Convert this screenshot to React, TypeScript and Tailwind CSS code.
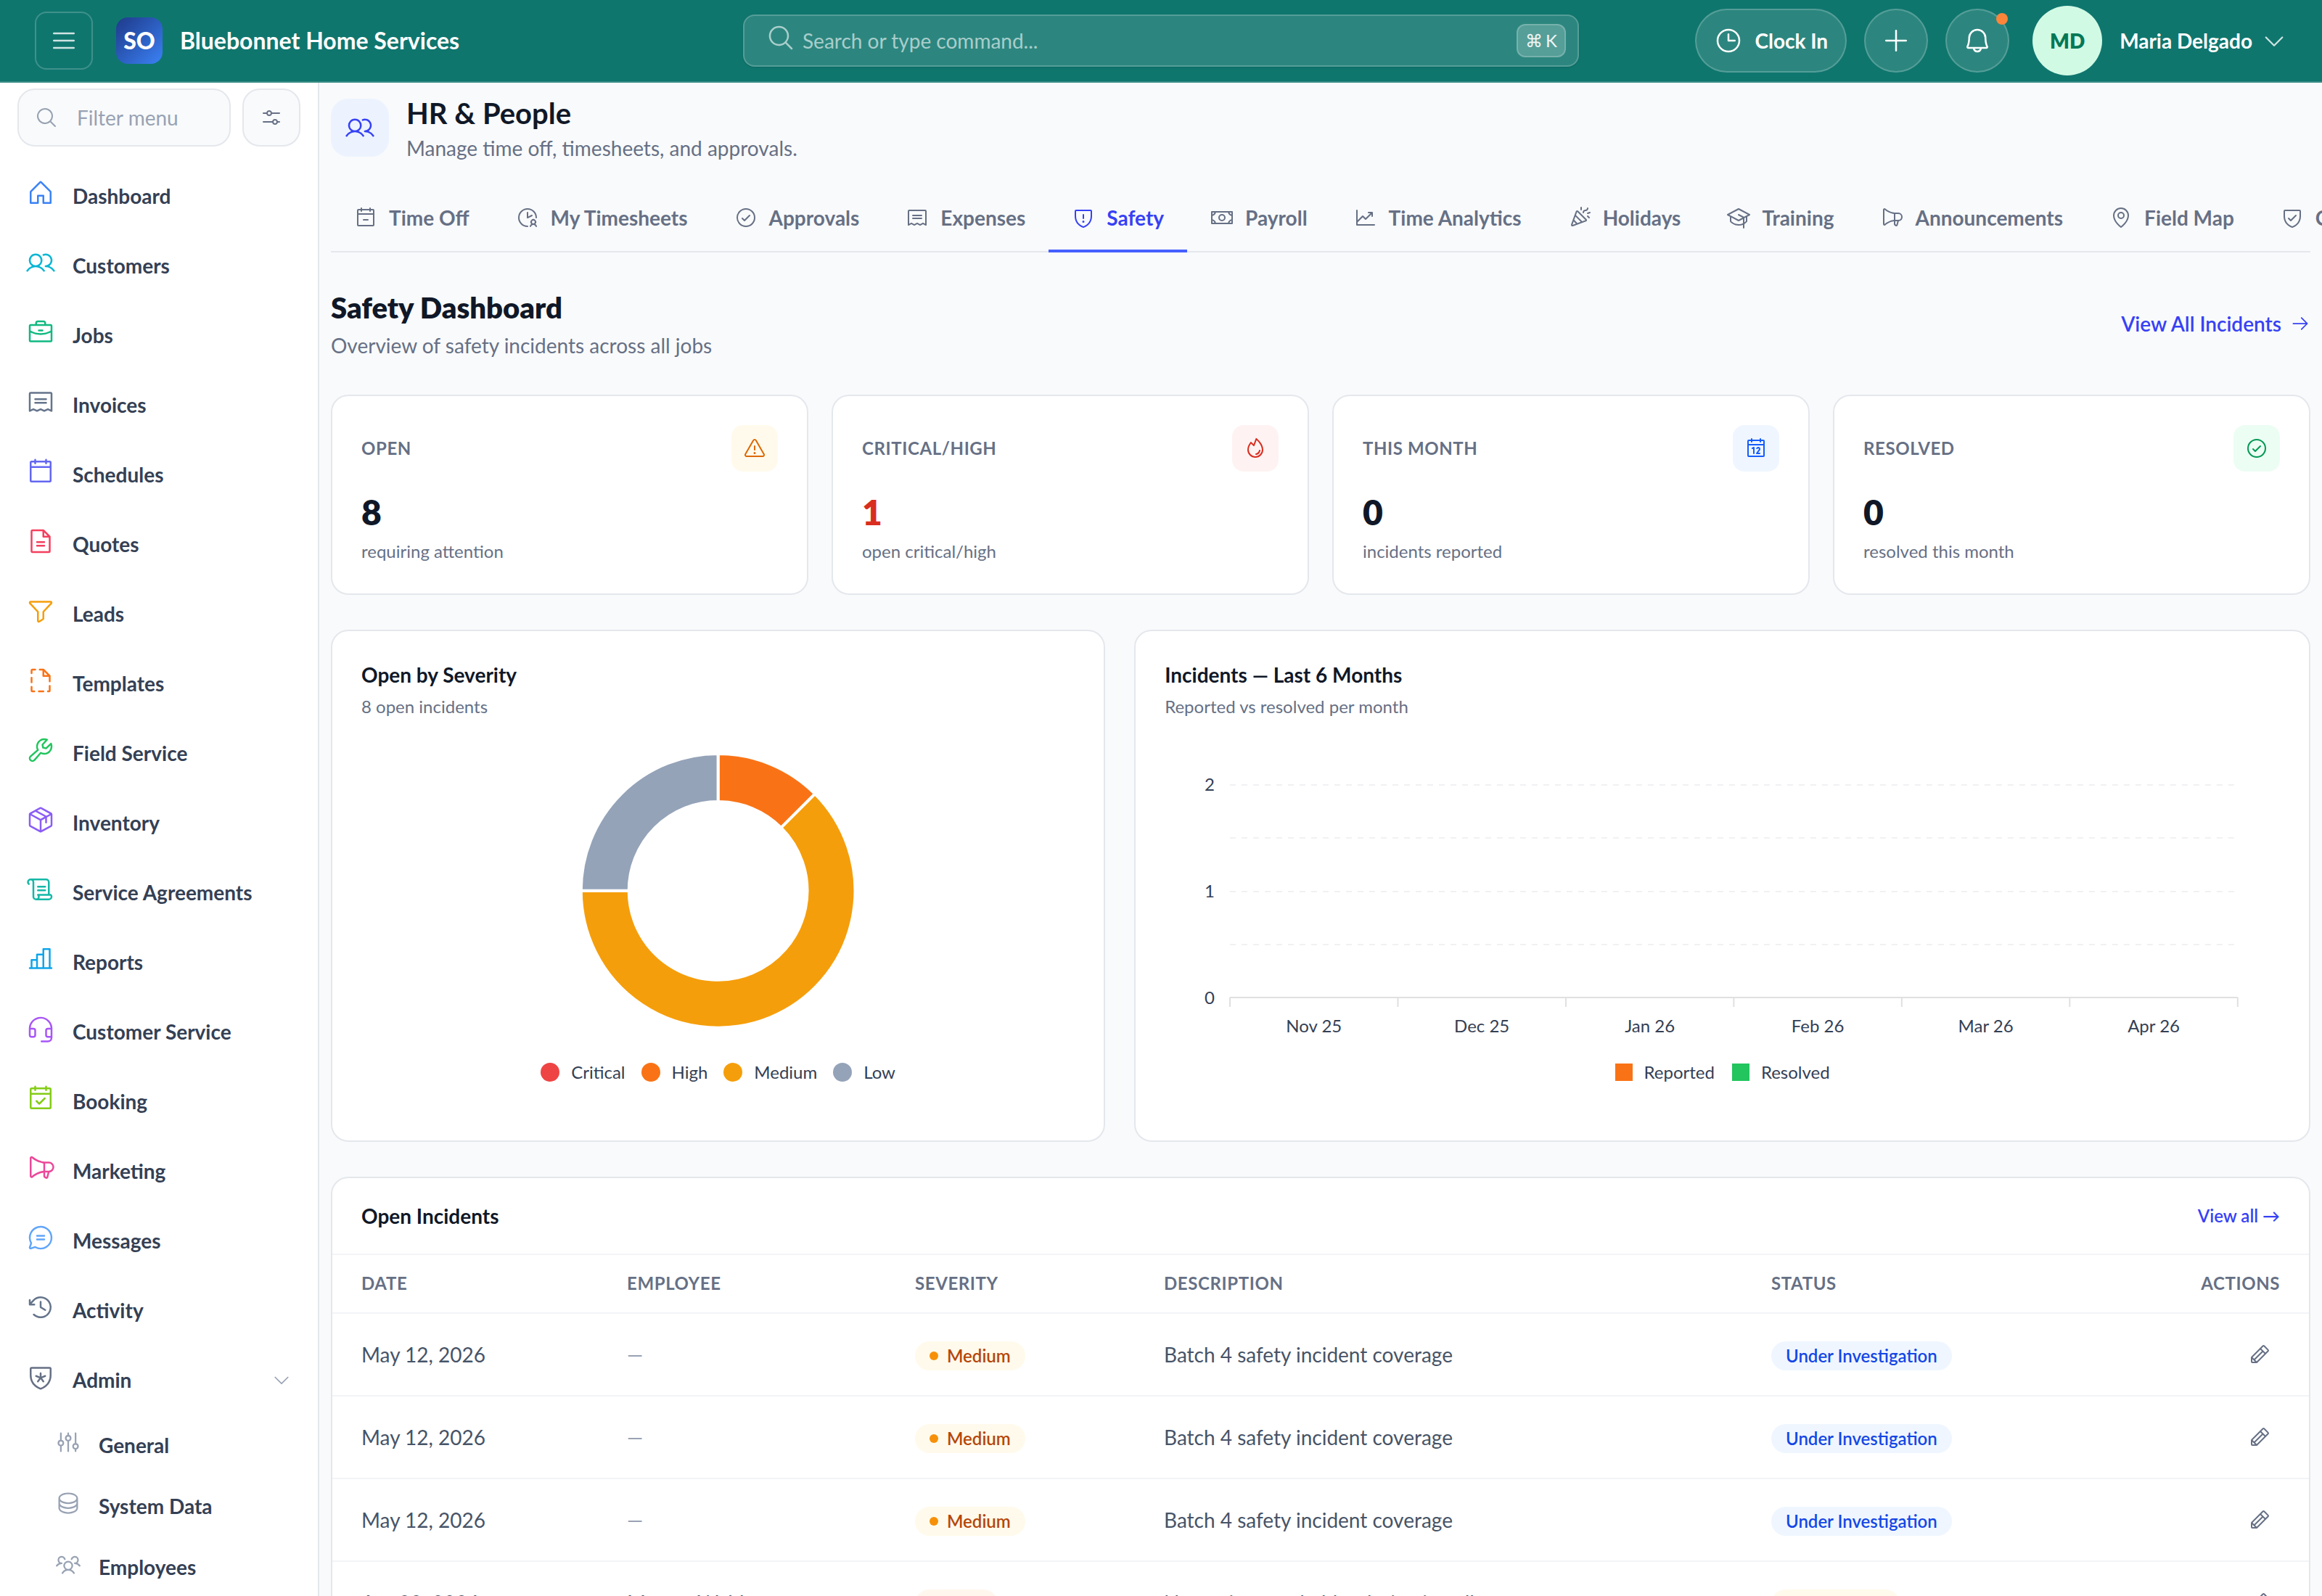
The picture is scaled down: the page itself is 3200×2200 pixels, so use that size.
import {
  PiArrowRight, PiBell, PiBriefcase, PiCalendar, PiCalendarBlank, PiCalendarCheck, PiCalendarMinus, PiCaretDown,
  PiChartBar, PiChartLineUp, PiChatCircleText, PiCheckCircle, PiClock, PiClockCounterClockwise, PiClockUser,
  PiConfetti, PiDatabase, PiFileDashed, PiFileText, PiFire, PiFunnel, PiGraduationCap, PiHeadset, PiHouse, PiList,
  PiMagnifyingGlass, PiMapPin, PiMegaphone, PiMoney, PiPackage, PiPencil, PiPlus, PiReceipt, PiScroll,
  PiShieldCheck, PiShieldStar, PiShieldWarning, PiSliders, PiSlidersHorizontal, PiUsers, PiUsersThree, PiWarning,
  PiWrench,
} from "react-icons/pi";

const NAV = [
  { label: "Dashboard", icon: PiHouse, color: "text-[#3b82f6]" },
  { label: "Customers", icon: PiUsers, color: "text-[#06b6d4]" },
  { label: "Jobs", icon: PiBriefcase, color: "text-[#10b981]" },
  { label: "Invoices", icon: PiReceipt, color: "text-[#64748b]" },
  { label: "Schedules", icon: PiCalendarBlank, color: "text-[#6366f1]" },
  { label: "Quotes", icon: PiFileText, color: "text-[#f43f5e]" },
  { label: "Leads", icon: PiFunnel, color: "text-[#f59e0b]" },
  { label: "Templates", icon: PiFileDashed, color: "text-[#f97316]" },
  { label: "Field Service", icon: PiWrench, color: "text-[#22c55e]" },
  { label: "Inventory", icon: PiPackage, color: "text-[#8b5cf6]" },
  { label: "Service Agreements", icon: PiScroll, color: "text-[#14b8a6]" },
  { label: "Reports", icon: PiChartBar, color: "text-[#0ea5e9]" },
  { label: "Customer Service", icon: PiHeadset, color: "text-[#a855f7]" },
  { label: "Booking", icon: PiCalendarCheck, color: "text-[#84cc16]" },
  { label: "Marketing", icon: PiMegaphone, color: "text-[#ec4899]" },
  { label: "Messages", icon: PiChatCircleText, color: "text-[#60a5fa]" },
  { label: "Activity", icon: PiClockCounterClockwise, color: "text-[#64748b]" },
];

const ADMIN_NAV = [
  { label: "General", icon: PiSliders },
  { label: "System Data", icon: PiDatabase },
  { label: "Employees", icon: PiUsersThree },
];

const TABS = [
  { label: "Time Off", icon: PiCalendarMinus },
  { label: "My Timesheets", icon: PiClockUser },
  { label: "Approvals", icon: PiCheckCircle },
  { label: "Expenses", icon: PiReceipt },
  { label: "Safety", icon: PiShieldWarning },
  { label: "Payroll", icon: PiMoney },
  { label: "Time Analytics", icon: PiChartLineUp },
  { label: "Holidays", icon: PiConfetti },
  { label: "Training", icon: PiGraduationCap },
  { label: "Announcements", icon: PiMegaphone },
  { label: "Field Map", icon: PiMapPin },
  { label: "Compliance", icon: PiShieldCheck },
];

const STATS = [
  { label: "Open", value: 8, note: "requiring attention", icon: PiWarning, box: "bg-[#fffaeb] text-[#dc6803]", text: "text-[#101828]" },
  { label: "Critical/High", value: 1, note: "open critical/high", icon: PiFire, box: "bg-[#fef3f2] text-[#d92d20]", text: "text-[#d92d20]" },
  { label: "This Month", value: 0, note: "incidents reported", icon: PiCalendar, box: "bg-blue-50 text-blue-600", text: "text-[#101828]" },
  { label: "Resolved", value: 0, note: "resolved this month", icon: PiCheckCircle, box: "bg-[#ecfdf3] text-[#039855]", text: "text-[#101828]" },
];

const SEVERITIES = [
  { label: "Critical", count: 0, color: "#ef4444", dot: "bg-[#ef4444]" },
  { label: "High", count: 1, color: "#f97316", dot: "bg-[#f97316]" },
  { label: "Medium", count: 5, color: "#f59e0b", dot: "bg-[#f59e0b]" },
  { label: "Low", count: 2, color: "#94a3b8", dot: "bg-[#94a3b8]" },
];

const MONTHS = ["Nov 25", "Dec 25", "Jan 26", "Feb 26", "Mar 26", "Apr 26"];

const INCIDENTS = [
  { id: 1, date: "May 12, 2026", employee: "", severity: "Medium", description: "Batch 4 safety incident coverage", status: "Under Investigation" },
  { id: 2, date: "May 12, 2026", employee: "", severity: "Medium", description: "Batch 4 safety incident coverage", status: "Under Investigation" },
  { id: 3, date: "May 12, 2026", employee: "", severity: "Medium", description: "Batch 4 safety incident coverage", status: "Under Investigation" },
  { id: 4, date: "Apr 28, 2026", employee: "Marcus Webb", severity: "High", description: "Near miss on a ladder during install", status: "Action Taken" },
];

function Donut() {
  const total = SEVERITIES.reduce((sum, s) => sum + s.count, 0);
  const point = (r: number, turn: number) => {
    const a = turn * 2 * Math.PI - Math.PI / 2;
    return `${492 + r * Math.cos(a)} ${220 + r * Math.sin(a)}`;
  };
  let from = 0;
  return (
    <svg viewBox="0 0 984 432" className="w-full" role="img" aria-label="Open incidents by severity">
      {SEVERITIES.filter(s => s.count > 0).map(s => {
        const start = from / total;
        from += s.count;
        const end = from / total;
        const large = end - start > 0.5 ? 1 : 0;
        return (
          <path key={s.label} fill={s.color} stroke="#fff" strokeWidth="4"
            d={`M${point(189, start)} A189 189 0 ${large} 1 ${point(189, end)} L${point(123, end)} A123 123 0 ${large} 0 ${point(123, start)} Z`} />
        );
      })}
    </svg>
  );
}

function MonthlyChart() {
  const left = 90;
  const right = 1479;
  const step = (right - left) / MONTHS.length;
  return (
    <svg viewBox="0 0 1537 432" className="w-full" role="img" aria-label="Incidents reported and resolved per month">
      {[74, 147, 221, 294].map(y => (
        <line key={y} x1={left} x2={right} y1={y} y2={y} stroke="#f1f1f3" strokeWidth="2" strokeDasharray="8 8" />
      ))}
      <line x1={left} x2={right} y1="367" y2="367" stroke="#e0e0e0" strokeWidth="2" />
      {[0, 1, 2, 3, 4, 5, 6].map(i => (
        <line key={i} x1={left + i * step} x2={left + i * step} y1="367" y2="380" stroke="#e0e0e0" strokeWidth="2" />
      ))}
      <g fill="#344054" fontSize="24">
        {["2", "1", "0"].map((n, i) => (
          <text key={n} x="69" y={82 + i * 147} textAnchor="end">{n}</text>
        ))}
        {MONTHS.map((m, i) => (
          <text key={m} x={left + step * i + step / 2} y="415" textAnchor="middle">{m}</text>
        ))}
      </g>
    </svg>
  );
}

function Header() {
  return (
    <header className="flex items-center h-[114px] px-12 bg-[#0f766e] border-b-2 border-[#3b8d86] text-white">
      <div className="flex flex-1 items-center">
        <button aria-label="Toggle menu" className="flex items-center justify-center size-20 mr-8 rounded-2xl border-2 border-white/20 text-white/80">
          <PiList className="size-10" />
        </button>
        <div className="flex items-center justify-center size-16 mr-6 rounded-2xl bg-linear-to-br from-[#1e3a8a] to-[#3b82f6] text-[32px] font-black">SO</div>
        <span className="text-[32px] font-bold whitespace-nowrap">Bluebonnet Home Services</span>
      </div>

      <div className="flex items-center w-full max-w-[1152px] h-[72px] pl-[30px] pr-4 rounded-2xl border-2 border-white/20 bg-white/12 shadow-sm">
        <PiMagnifyingGlass className="size-10 mb-2 text-white/60" />
        <input type="text" aria-label="Search" placeholder="Search or type command..." className="flex-1 ml-[10px] bg-transparent text-[28px] outline-none placeholder:text-white/60" />
        <kbd className="flex items-center gap-1 h-[46px] px-[10px] rounded-xl border-2 border-white/20 bg-white/20 font-[inherit] text-2xl text-white/90">
          <span>⌘</span>
          <span>K</span>
        </kbd>
      </div>

      <div className="flex flex-1 items-center justify-end">
        <button className="flex items-center gap-4 h-[88px] px-6 mr-6 rounded-full border-2 border-white/20 bg-white/12 text-[28px] font-bold whitespace-nowrap">
          <PiClock className="size-10" />
          Clock In
        </button>
        <button aria-label="Add" className="flex items-center justify-center size-[88px] mr-6 rounded-full border-2 border-white/20 bg-white/12">
          <PiPlus className="size-10" />
        </button>
        <button aria-label="Notifications" className="relative flex items-center justify-center size-[88px] mr-8 rounded-full border-2 border-white/20 bg-white/12">
          <PiBell className="size-10" />
          <span className="absolute top-1 right-0 size-4 rounded-full bg-[#fd853a]" />
        </button>
        <button className="flex items-center text-[28px] font-bold whitespace-nowrap">
          <span className="flex items-center justify-center size-24 mr-6 rounded-full bg-[#d1fae5] font-extrabold text-[#047857]">MD</span>
          Maria Delgado
          <PiCaretDown className="size-9 ml-3 text-white/80" />
        </button>
      </div>
    </header>
  );
}

function Sidebar() {
  return (
    <aside className="w-[440px] shrink-0 border-r-2 border-[#e4e7ec] bg-white">
      <div className="flex gap-4 pt-2 px-6">
        <div className="flex flex-1 min-w-0 items-center gap-[26px] h-20 px-[22px] rounded-3xl border-2 border-[#e4e7ec] bg-[#f9fafb]">
          <PiMagnifyingGlass className="size-8 shrink-0 text-[#98a2b3]" />
          <input type="text" aria-label="Filter menu" placeholder="Filter menu" className="w-full min-w-0 bg-transparent text-[28px] outline-none placeholder:text-[#98a2b3]" />
        </div>
        <button aria-label="Menu settings" className="flex items-center justify-center size-20 shrink-0 rounded-3xl border-2 border-[#e4e7ec] bg-[#f9fafb] text-[#667085]">
          <PiSlidersHorizontal className="size-8" />
        </button>
      </div>
      <nav className="mt-5 text-[28px] font-bold text-[#344054]">
        {NAV.map(item => (
          <a key={item.label} href="#" className="flex items-center gap-6 h-24 px-9">
            <item.icon className={`size-10 mb-2 ${item.color}`} />
            {item.label}
          </a>
        ))}
        <button className="flex items-center gap-6 w-full h-24 px-9">
          <PiShieldStar className="size-10 mb-2 text-[#667085]" />
          Admin
          <PiCaretDown className="size-7 ml-auto text-[#98a2b3]" />
        </button>
        {ADMIN_NAV.map(item => (
          <a key={item.label} href="#" className="flex items-center gap-6 h-[84px] pl-19">
            <item.icon className="size-9 mb-2 text-[#98a2b3]" />
            {item.label}
          </a>
        ))}
      </nav>
    </aside>
  );
}

function SeverityBadge({ level }: { level: string }) {
  const high = level === "High";
  return (
    <span className={`inline-flex items-center gap-3 h-10 px-5 rounded-full align-middle text-2xl font-semibold ${high ? "bg-[#fff6ed] text-[#c4320a]" : "bg-[#fffaeb] text-[#b54708]"}`}>
      <span className={`size-3 rounded-full ${high ? "bg-[#fb6514]" : "bg-[#f79009]"}`} />
      {level}
    </span>
  );
}

function IncidentTable() {
  return (
    <section className="mt-12 rounded-3xl border-2 border-[#e4e7ec] bg-white">
      <div className="flex items-center justify-between h-[106px] px-10 border-b-2 border-[#f2f4f7]">
        <h3 className="text-[28px] font-bold">Open Incidents</h3>
        <a href="#" className="text-2xl font-semibold text-[#3641f5]">View all →</a>
      </div>
      <table className="w-full table-fixed text-left">
        <thead>
          <tr className="h-20 border-b-2 border-[#f2f4f7] text-2xl uppercase tracking-wide text-[#667085]">
            <th className="w-[366px] px-10 font-bold">Date</th>
            <th className="w-[397px] px-10 font-bold">Employee</th>
            <th className="w-[343px] px-10 font-bold">Severity</th>
            <th className="w-[837px] px-10 font-bold">Description</th>
            <th className="px-10 font-bold">Status</th>
            <th className="w-[240px] px-10 text-right font-bold">Actions</th>
          </tr>
        </thead>
        <tbody>
          {INCIDENTS.map(row => (
            <tr key={row.id} className="h-[114px] border-b-2 border-[#f2f4f7] text-[28px] text-[#475467]">
              <td className="px-10">{row.date}</td>
              <td className="px-10">{row.employee || <span className="text-[#98a2b3]">—</span>}</td>
              <td className="px-10"><SeverityBadge level={row.severity} /></td>
              <td className="px-10 truncate">{row.description}</td>
              <td className="px-10">
                <span className={`inline-flex items-center h-10 px-5 rounded-full align-middle text-2xl font-semibold ${row.status === "Under Investigation" ? "bg-blue-50 text-blue-700" : "bg-[#fffaeb] text-[#b54708]"}`}>
                  {row.status}
                </span>
              </td>
              <td className="px-10 text-right">
                <button aria-label="Edit incident" className="p-3 align-middle text-[#667085]">
                  <PiPencil className="size-8" />
                </button>
              </td>
            </tr>
          ))}
        </tbody>
      </table>
    </section>
  );
}

export default function App() {
  return (
    <div className="flex flex-col h-screen overflow-hidden bg-[#f9fafb] font-['Lato',sans-serif] text-[#101828]">
      <Header />
      <div className="flex flex-1 min-h-0">
        <Sidebar />
        <main className="flex-1 min-w-0 px-4">
          <div className="flex gap-6 pt-[22px]">
            <div className="flex items-center justify-center size-20 rounded-3xl bg-[#ecf3ff] text-[#3641f5]">
              <PiUsers className="size-10" />
            </div>
            <div>
              <h1 className="text-[40px] leading-10 font-bold">HR & People</h1>
              <p className="mt-2 text-[28px] leading-10 text-[#667085]">Manage time off, timesheets, and approvals.</p>
            </div>
          </div>

          <nav className="flex h-[96px] mt-7 border-b-2 border-[#e4e7ec]">
            {TABS.map(tab => (
              <a key={tab.label} href="#"
                className={`flex items-center shrink-0 gap-4 h-[96px] px-8 pt-1 border-b-4 text-[28px] font-bold whitespace-nowrap ${tab.label === "Safety" ? "border-[#465fff] text-[#3641f5]" : "border-transparent text-[#667085]"}`}>
                <tab.icon className="size-8" />
                {tab.label}
              </a>
            ))}
          </nav>

          <div className="flex items-center justify-between mt-12">
            <div>
              <h2 className="text-[40px] leading-[56px] font-extrabold">Safety Dashboard</h2>
              <p className="mt-1 text-[28px] leading-10 text-[#667085]">Overview of safety incidents across all jobs</p>
            </div>
            <a href="#" className="flex items-center gap-3 text-[28px] font-semibold text-[#3641f5]">
              View All Incidents
              <PiArrowRight className="size-7" />
            </a>
          </div>

          <div className="grid grid-cols-4 gap-8 mt-12">
            {STATS.map(stat => (
              <div key={stat.label} className="p-10 rounded-3xl border-2 border-[#e4e7ec] bg-white">
                <div className="flex items-center justify-between">
                  <span className="text-2xl font-bold uppercase tracking-wide text-[#667085]">{stat.label}</span>
                  <span className={`flex items-center justify-center size-16 rounded-2xl ${stat.box}`}>
                    <stat.icon className="size-8" />
                  </span>
                </div>
                <p className={`mt-6 text-5xl leading-[64px] font-extrabold ${stat.text}`}>{stat.value}</p>
                <p className="mt-1 text-2xl leading-9 text-[#667085]">{stat.note}</p>
              </div>
            ))}
          </div>

          <div className="grid grid-cols-5 gap-10 mt-12">
            <section className="col-span-2 p-10 rounded-3xl border-2 border-[#e4e7ec] bg-white">
              <h3 className="text-[28px] leading-10 font-bold">Open by Severity</h3>
              <p className="mt-[6px] mb-4 text-2xl leading-9 text-[#667085]">8 open incidents</p>
              <Donut />
              <ul className="flex justify-center gap-[22px] mt-5 mb-9 text-2xl leading-9 text-[#344054]">
                {SEVERITIES.map(s => (
                  <li key={s.label} className="flex items-center gap-4">
                    <span className={`size-[26px] rounded-full ${s.dot}`} />
                    {s.label}
                  </li>
                ))}
              </ul>
            </section>
            <section className="col-span-3 p-10 rounded-3xl border-2 border-[#e4e7ec] bg-white">
              <h3 className="text-[28px] leading-10 font-bold">Incidents — Last 6 Months</h3>
              <p className="mt-[6px] mb-4 text-2xl leading-9 text-[#667085]">Reported vs resolved per month</p>
              <MonthlyChart />
              <ul className="flex justify-center gap-6 mt-5 text-2xl leading-9 text-[#344054]">
                <li className="flex items-center gap-4"><span className="size-6 bg-[#f97316]" />Reported</li>
                <li className="flex items-center gap-4"><span className="size-6 bg-[#22c55e]" />Resolved</li>
              </ul>
            </section>
          </div>

          <IncidentTable />
        </main>
      </div>
    </div>
  );
}
